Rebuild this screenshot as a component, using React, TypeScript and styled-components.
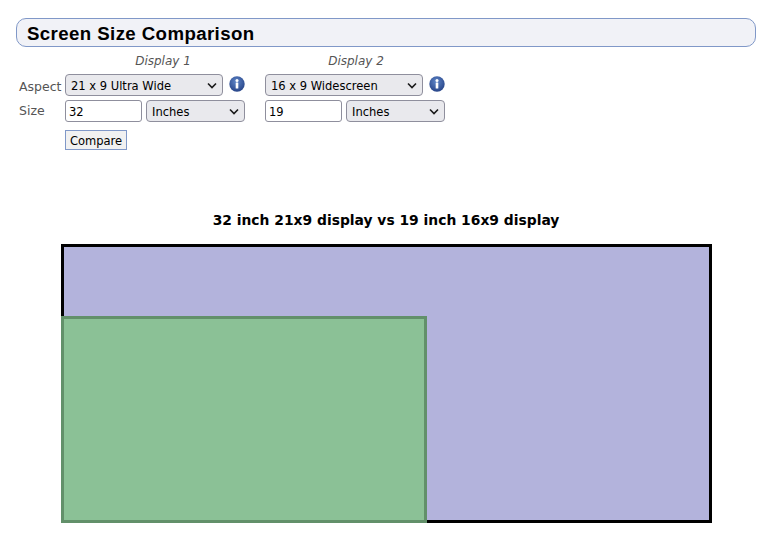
import React from "react";
import styled, { createGlobalStyle } from "styled-components";

const Global = createGlobalStyle`
  html, body { margin: 0; padding: 0; background: #fff; }
  body { font-family: "DejaVu Sans", sans-serif; }
`;
const Page = styled.div`
  width: 762px;
  height: 543px;
  overflow: hidden;
  padding: 18px 6px 0 16px;
  box-sizing: border-box;
`;
const Heading = styled.h1`
  margin: 0;
  height: 29px;
  box-sizing: border-box;
  border: 1px solid #8098c8;
  border-radius: 10px;
  background: #f1f2f7;
  padding-left: 10px;
  font: bold 18.67px/29px "Liberation Sans", Arial, sans-serif;
  letter-spacing: 0.4px;
  color: #000;
`;
const Form = styled.form`
  display: grid;
  grid-template-columns: 46px 200px 200px;
  grid-template-rows: 17px 22px 22px;
  row-gap: 4px;
  margin: 6px 0 0 3px;
  color: #555;
`;
const Caption = styled.div<{ $shift: number }>`
  text-align: center;
  font-style: italic;
  font-size: 12px;
  line-height: 17px;
  color: #555;
  width: 196px;
  margin-left: ${(p) => p.$shift}px;
`;
const RowLabel = styled.label<{ $line: number }>`
  font-size: 12.5px;
  line-height: ${(p) => p.$line}px;
  color: #555;
`;
const Cell = styled.div`
  display: flex;
  align-items: center;
  gap: 4px;
`;
const SelectWrap = styled.div<{ $w: number }>`
  position: relative;
  width: ${(p) => p.$w}px;
  height: 22px;
`;
const Select = styled.select`
  appearance: none;
  width: 100%;
  height: 100%;
  box-sizing: border-box;
  border: 1px solid #8f8f9d;
  border-radius: 4px;
  background: #e9e9ed;
  padding: 0 0 0 5px;
  font: 12.8px "DejaVu Sans", sans-serif;
  font-stretch: condensed;
  color: #000;
`;
const Chevron = styled.svg`
  position: absolute;
  right: 5px;
  top: 7px;
  pointer-events: none;
`;
const Input = styled.input`
  width: 77px;
  height: 22px;
  box-sizing: border-box;
  border: 1px solid #8f8f9d;
  border-radius: 3px;
  padding: 0 3px;
  font: 12.8px "DejaVu Sans", sans-serif;
  font-stretch: condensed;
  color: #000;
  background: #fff;
`;
const InfoIcon = styled.svg`
  flex: none;
  margin: 0 0 2px 2px;
`;
const Submit = styled.button`
  display: block;
  margin: 8px 0 0 49px;
  width: 62px;
  height: 20px;
  box-sizing: border-box;
  border: 1px solid #8098c8;
  background: #f1f1f1;
  padding: 1px 0 0;
  font: 12.8px "DejaVu Sans", sans-serif;
  font-stretch: condensed;
  color: #000;
`;
const Title = styled.h2`
  margin: 60px 0 0;
  width: 740px;
  text-align: center;
  font: bold 13.87px/20px "DejaVu Sans", sans-serif;
  color: #000;
`;
const Chart = styled.div`
  position: relative;
  margin: 14px 0 0 45px;
  width: 651px;
  height: 279px;
  box-sizing: border-box;
  border: 3px solid #000;
  background: #b3b3dc;
`;
const Overlay = styled.div`
  position: absolute;
  left: -3px;
  bottom: -3px;
  width: 366px;
  height: 207px;
  box-sizing: border-box;
  border: 3px solid #62906a;
  background: #8bc196;
`;

const Arrow = () => (
  <Chevron width="12" height="10" viewBox="0 0 12 10" fill="none" stroke="#1a1a1a" strokeWidth="1.6">
    <path d="M2 2.5 L6 6.5 L10 2.5" />
  </Chevron>
);

const Info = ({ id }: { id: string }) => (
  <InfoIcon width="16" height="16" viewBox="0 0 16 16">
    <defs>
      <radialGradient id={id} cx="0.45" cy="0.35" r="0.7">
        <stop offset="0" stopColor="#5f86c8" />
        <stop offset="1" stopColor="#234084" />
      </radialGradient>
    </defs>
    <circle cx="8" cy="8" r="7.7" fill={`url(#${id})`} />
    <circle cx="8" cy="4.4" r="1.5" fill="#fff" />
    <rect x="6.7" y="6.6" width="2.6" height="6" rx="0.4" fill="#fff" />
  </InfoIcon>
);

const Picker = ({ w, value, options }: { w: number; value: string; options: string[] }) => (
  <SelectWrap $w={w}>
    <Select defaultValue={value}>
      {options.map((o) => (
        <option key={o}>{o}</option>
      ))}
    </Select>
    <Arrow />
  </SelectWrap>
);

const aspects = ["21 x 9 Ultra Wide", "16 x 9 Widescreen", "16 x 10", "4 x 3"];
const units = ["Inches", "Centimeters"];

export default function App() {
  return (
    <Page>
      <Global />
      <Heading>Screen Size Comparison</Heading>
      <Form onSubmit={(e) => e.preventDefault()}>
        <span />
        <Caption $shift={0}>Display 1</Caption>
        <Caption $shift={-7}>Display 2</Caption>
        <RowLabel $line={26}>Aspect</RowLabel>
        <Cell>
          <Picker w={158} value={aspects[0]} options={aspects} />
          <Info id="info-a" />
        </Cell>
        <Cell>
          <Picker w={158} value={aspects[1]} options={aspects} />
          <Info id="info-b" />
        </Cell>
        <RowLabel $line={22}>Size</RowLabel>
        <Cell>
          <Input defaultValue="32" />
          <Picker w={99} value="Inches" options={units} />
        </Cell>
        <Cell>
          <Input defaultValue="19" />
          <Picker w={99} value="Inches" options={units} />
        </Cell>
      </Form>
      <Submit type="button">Compare</Submit>
      <Title>32 inch 21x9 display vs 19 inch 16x9 display</Title>
      <Chart>
        <Overlay />
      </Chart>
    </Page>
  );
}
